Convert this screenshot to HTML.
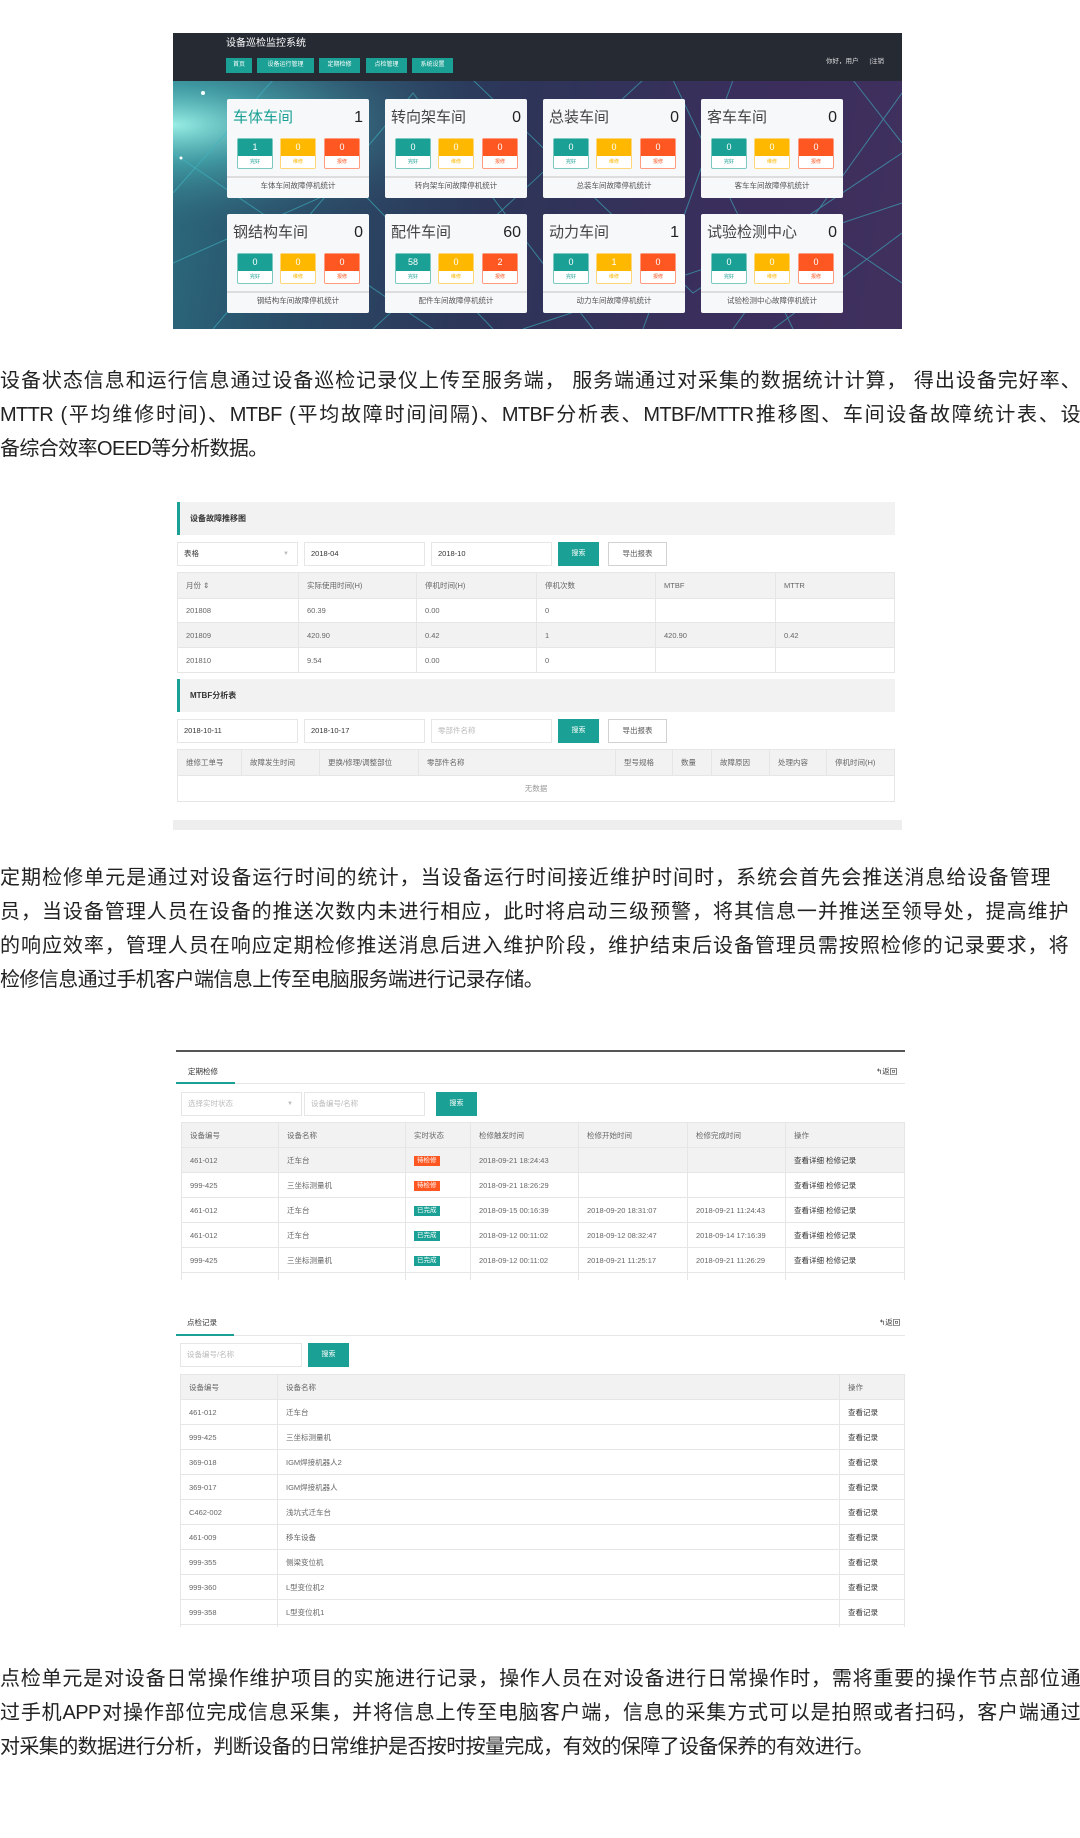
<!DOCTYPE html>
<html><head><meta charset="utf-8">
<style>
*{margin:0;padding:0;box-sizing:border-box}
body{width:1080px;height:1838px;background:#fff;position:relative;overflow:hidden;font-family:"Liberation Sans","Noto Sans CJK SC",sans-serif;}
.abs{position:absolute}
.p{position:absolute;left:0;font-size:20px;color:#222;line-height:34px;letter-spacing:-0.6px}
.p div{text-align:justify;text-align-last:justify;white-space:nowrap;height:34px;overflow:visible}
.p div.l{text-align-last:left}
#dash{left:173px;top:33px;width:729px;height:296px;overflow:hidden;background:linear-gradient(100deg,#2b6f80 0%,#2a4a66 22%,#2d3558 45%,#3a2e5c 75%,#40305e 100%)}
#dash .hd{position:absolute;left:0;top:0;width:100%;height:48px;background:#262a33}
.nav{position:absolute;top:25px;height:15px;background:#1aa094;color:#fff;font-size:6px;line-height:15px;text-align:center}
.card{position:absolute;width:142px;height:99px;background:#f7f8fa;border-radius:2px}
.card .t{position:absolute;left:6px;top:9px;font-size:15px;color:#444;line-height:20px}
.card .n{position:absolute;right:6px;top:9px;font-size:16px;color:#222;line-height:20px}
.bx{position:absolute;top:39px;width:36px;height:31px;border:1px solid;border-radius:2px;background:#fff}
.bx b{display:block;height:17px;color:#fff;font-weight:normal;font-size:9px;line-height:17px;text-align:center}
.bx i{display:block;font-style:normal;font-size:5px;line-height:12px;text-align:center}
.g{border-color:#7cc9c2}.g b{background:#1aa094}.g i{color:#1aa094}
.y{border-color:#ffd57a}.y b{background:#ffb800}.y i{color:#ffb800}
.r{border-color:#ff9c80}.r b{background:#ff5722}.r i{color:#ff5722}
.card .dv{position:absolute;left:0;top:77px;width:100%;height:2px;background:#ddd}
.card .f{position:absolute;left:0;top:80px;width:100%;text-align:center;font-size:7.5px;color:#555;line-height:14px}
.shot{position:absolute;font-size:7.5px;color:#666}
.inp{position:absolute;border:1px solid #e6e6e6;background:#fff;font-size:7.5px;line-height:22px;padding-left:6px;color:#333}
.btn{position:absolute;background:#1aa094;color:#fff;font-size:7px;text-align:center}
table{border-collapse:collapse;position:absolute;font-size:7.5px;color:#666}
td{border:1px solid #e6e6e6;padding-left:8px;white-space:nowrap;overflow:hidden}
.tag{display:inline-block;color:#fff;font-size:6.5px;padding:0 3px;line-height:10px}
</style></head><body>

<div id="dash" class="abs">
<svg class="abs" style="left:0;top:0" width="729" height="296">
<defs><radialGradient id="gl" cx="0" cy="0.18" r="0.45"><stop offset="0" stop-color="#9ff5ea" stop-opacity="0.95"/><stop offset="0.35" stop-color="#4fc0c0" stop-opacity="0.55"/><stop offset="1" stop-color="#2a4a66" stop-opacity="0"/></radialGradient></defs>
<rect x="0" y="47" width="729" height="249" fill="url(#gl)"/>
<g stroke="#3fb6c4" stroke-width="1" opacity="0.6" fill="none">
<path d="M0 230 L180 150 L320 296"/><path d="M40 296 L240 60 L420 296"/><path d="M300 47 L520 260 L729 120"/>
<path d="M560 47 L470 296"/><path d="M600 296 L729 200"/><path d="M680 47 L729 110"/><path d="M100 47 L0 160"/>
<path d="M350 296 L729 170"/><path d="M200 296 L470 47"/><path d="M729 60 L560 296"/><path d="M0 120 L260 296"/>
<path d="M640 190 L729 250"/><path d="M500 47 L620 296"/>
</g>
<circle cx="563" cy="186" r="4" fill="#fff"/><circle cx="30" cy="60" r="2" fill="#fff"/><circle cx="8" cy="125" r="1.5" fill="#fff"/>
</svg>
<div class="hd"></div>
<div class="abs" style="left:53px;top:4px;color:#fff;font-size:10px;line-height:14px">设备巡检监控系统</div>
<div class="nav" style="left:53px;width:26px">首页</div>
<div class="nav" style="left:84px;width:57px">设备运行管理</div>
<div class="nav" style="left:146px;width:41px">定期检修</div>
<div class="nav" style="left:193px;width:41px">点检管理</div>
<div class="nav" style="left:239px;width:41px">系统设置</div>
<div class="abs" style="left:653px;top:22px;color:#ddd;font-size:6.5px">你好，用户 &nbsp;&nbsp;&nbsp;&nbsp;&nbsp;|注销</div>

<div class="card" style="left:54px;top:66px"><div class="t" style="color:#1aa094">车体车间</div><div class="n">1</div><div class="bx g" style="left:10px"><b>1</b><i>完好</i></div><div class="bx y" style="left:53px"><b>0</b><i>维修</i></div><div class="bx r" style="left:97px"><b>0</b><i>报修</i></div><div class="dv"></div><div class="f">车体车间故障停机统计</div></div>
<div class="card" style="left:212px;top:66px"><div class="t">转向架车间</div><div class="n">0</div><div class="bx g" style="left:10px"><b>0</b><i>完好</i></div><div class="bx y" style="left:53px"><b>0</b><i>维修</i></div><div class="bx r" style="left:97px"><b>0</b><i>报修</i></div><div class="dv"></div><div class="f">转向架车间故障停机统计</div></div>
<div class="card" style="left:370px;top:66px"><div class="t">总装车间</div><div class="n">0</div><div class="bx g" style="left:10px"><b>0</b><i>完好</i></div><div class="bx y" style="left:53px"><b>0</b><i>维修</i></div><div class="bx r" style="left:97px"><b>0</b><i>报修</i></div><div class="dv"></div><div class="f">总装车间故障停机统计</div></div>
<div class="card" style="left:528px;top:66px"><div class="t">客车车间</div><div class="n">0</div><div class="bx g" style="left:10px"><b>0</b><i>完好</i></div><div class="bx y" style="left:53px"><b>0</b><i>维修</i></div><div class="bx r" style="left:97px"><b>0</b><i>报修</i></div><div class="dv"></div><div class="f">客车车间故障停机统计</div></div>
<div class="card" style="left:54px;top:181px"><div class="t">钢结构车间</div><div class="n">0</div><div class="bx g" style="left:10px"><b>0</b><i>完好</i></div><div class="bx y" style="left:53px"><b>0</b><i>维修</i></div><div class="bx r" style="left:97px"><b>0</b><i>报修</i></div><div class="dv"></div><div class="f">钢结构车间故障停机统计</div></div>
<div class="card" style="left:212px;top:181px"><div class="t">配件车间</div><div class="n">60</div><div class="bx g" style="left:10px"><b>58</b><i>完好</i></div><div class="bx y" style="left:53px"><b>0</b><i>维修</i></div><div class="bx r" style="left:97px"><b>2</b><i>报修</i></div><div class="dv"></div><div class="f">配件车间故障停机统计</div></div>
<div class="card" style="left:370px;top:181px"><div class="t">动力车间</div><div class="n">1</div><div class="bx g" style="left:10px"><b>0</b><i>完好</i></div><div class="bx y" style="left:53px"><b>1</b><i>维修</i></div><div class="bx r" style="left:97px"><b>0</b><i>报修</i></div><div class="dv"></div><div class="f">动力车间故障停机统计</div></div>
<div class="card" style="left:528px;top:181px"><div class="t">试验检测中心</div><div class="n">0</div><div class="bx g" style="left:10px"><b>0</b><i>完好</i></div><div class="bx y" style="left:53px"><b>0</b><i>维修</i></div><div class="bx r" style="left:97px"><b>0</b><i>报修</i></div><div class="dv"></div><div class="f">试验检测中心故障停机统计</div></div>
</div>

<div class="p" style="top:364px;width:1080px">
<div>设备状态信息和运行信息通过设备巡检记录仪上传至服务端， 服务端通过对采集的数据统计计算， 得出设备完好率、</div>
<div>MTTR (平均维修时间)、MTBF (平均故障时间间隔)、MTBF分析表、MTBF/MTTR推移图、车间设备故障统计表、设</div>
<div class="l">备综合效率OEED等分析数据。</div>
</div>

<div class="shot" style="left:173px;top:501px;width:729px;height:329px">
<div class="abs" style="left:4px;top:1px;width:718px;height:33px;background:#f2f2f2;border-left:3px solid #1aa094"></div>
<div class="abs" style="left:17px;top:12px;font-size:8px;font-weight:bold;color:#333">设备故障推移图</div>
<div class="inp" style="left:4px;top:41px;width:121px;height:24px">表格<span style="position:absolute;right:8px;color:#bbb;font-size:6px">▼</span></div>
<div class="inp" style="left:131px;top:41px;width:121px;height:24px">2018-04</div>
<div class="inp" style="left:258px;top:41px;width:121px;height:24px">2018-10</div>
<div class="btn" style="left:385px;top:41px;width:41px;height:24px;line-height:24px">搜索</div>
<div class="inp" style="left:435px;top:41px;width:59px;height:24px;text-align:center;padding:0;color:#555;border-color:#d2d2d2">导出报表</div>
<table style="left:4px;top:71px;width:718px">
<tr style="background:#f2f2f2;height:26px"><td style="width:121px">月份 ⇕</td><td style="width:118px">实际使用时间(H)</td><td style="width:120px">停机时间(H)</td><td style="width:119px">停机次数</td><td style="width:120px">MTBF</td><td>MTTR</td></tr>
<tr style="height:24px"><td>201808</td><td>60.39</td><td>0.00</td><td>0</td><td></td><td></td></tr>
<tr style="height:25px;background:#f2f2f2"><td>201809</td><td>420.90</td><td>0.42</td><td>1</td><td>420.90</td><td>0.42</td></tr>
<tr style="height:25px"><td>201810</td><td>9.54</td><td>0.00</td><td>0</td><td></td><td></td></tr>
</table>
<div class="abs" style="left:4px;top:178px;width:718px;height:33px;background:#f2f2f2;border-left:3px solid #1aa094"></div>
<div class="abs" style="left:17px;top:189px;font-size:8px;font-weight:bold;color:#333">MTBF分析表</div>
<div class="inp" style="left:4px;top:218px;width:121px;height:24px">2018-10-11</div>
<div class="inp" style="left:131px;top:218px;width:121px;height:24px">2018-10-17</div>
<div class="inp" style="left:258px;top:218px;width:121px;height:24px;color:#bbb">零部件名称</div>
<div class="btn" style="left:385px;top:218px;width:41px;height:24px;line-height:24px">搜索</div>
<div class="inp" style="left:435px;top:218px;width:59px;height:24px;text-align:center;padding:0;color:#555;border-color:#d2d2d2">导出报表</div>
<table style="left:4px;top:248px;width:718px">
<tr style="background:#f2f2f2;height:26px"><td style="width:64px">维修工单号</td><td style="width:78px">故障发生时间</td><td style="width:99px">更换/修理/调整部位</td><td style="width:197px">零部件名称</td><td style="width:57px">型号规格</td><td style="width:39px">数量</td><td style="width:58px">故障原因</td><td style="width:57px">处理内容</td><td>停机时间(H)</td></tr>
<tr style="height:26px"><td colspan="9" style="text-align:center;color:#999;padding:0">无数据</td></tr>
</table>
<div class="abs" style="left:0;top:319px;width:729px;height:10px;background:#eee"></div>
</div>

<div class="p" style="top:861px;width:1068px">
<div style="width:1050px">定期检修单元是通过对设备运行时间的统计，当设备运行时间接近维护时间时，系统会首先会推送消息给设备管理</div>
<div>员，当设备管理人员在设备的推送次数内未进行相应，此时将启动三级预警，将其信息一并推送至领导处，提高维护</div>
<div>的响应效率，管理人员在响应定期检修推送消息后进入维护阶段，维护结束后设备管理员需按照检修的记录要求，将</div>
<div class="l">检修信息通过手机客户端信息上传至电脑服务端进行记录存储。</div>
</div>

<div class="shot" style="left:176px;top:1050px;width:729px;height:230px;overflow:hidden">
<div class="abs" style="left:0;top:0;width:729px;height:2px;background:#555"></div>
<div class="abs" style="left:12px;top:16px;color:#333">定期检修</div>
<div class="abs" style="left:0;top:33px;width:729px;height:1px;background:#e6e6e6"></div>
<div class="abs" style="left:0;top:32px;width:59px;height:2px;background:#1aa094"></div>
<div class="abs" style="left:700px;top:16px;color:#333">↰返回</div>
<div class="inp" style="left:5px;top:42px;width:121px;height:24px;color:#bbb">选择实时状态<span style="position:absolute;right:8px;font-size:6px">▼</span></div>
<div class="inp" style="left:128px;top:42px;width:121px;height:24px;color:#bbb">设备编号/名称</div>
<div class="btn" style="left:260px;top:42px;width:41px;height:24px;line-height:24px">搜索</div>
<table style="left:5px;top:72px;width:724px">
<tr style="background:#f2f2f2;height:25px"><td style="width:97px">设备编号</td><td style="width:127px">设备名称</td><td style="width:65px">实时状态</td><td style="width:108px">检修触发时间</td><td style="width:109px">检修开始时间</td><td style="width:98px">检修完成时间</td><td>操作</td></tr>
<tr style="height:25px;background:#f2f2f2"><td>461-012</td><td>迁车台</td><td><span class="tag" style="background:#ff5722">待检修</span></td><td>2018-09-21 18:24:43</td><td></td><td></td><td style="color:#333">查看详细 检修记录</td></tr>
<tr style="height:25px"><td>999-425</td><td>三坐标测量机</td><td><span class="tag" style="background:#ff5722">待检修</span></td><td>2018-09-21 18:26:29</td><td></td><td></td><td style="color:#333">查看详细 检修记录</td></tr>
<tr style="height:25px"><td>461-012</td><td>迁车台</td><td><span class="tag" style="background:#1aa094">已完成</span></td><td>2018-09-15 00:16:39</td><td>2018-09-20 18:31:07</td><td>2018-09-21 11:24:43</td><td style="color:#333">查看详细 检修记录</td></tr>
<tr style="height:25px"><td>461-012</td><td>迁车台</td><td><span class="tag" style="background:#1aa094">已完成</span></td><td>2018-09-12 00:11:02</td><td>2018-09-12 08:32:47</td><td>2018-09-14 17:16:39</td><td style="color:#333">查看详细 检修记录</td></tr>
<tr style="height:25px"><td>999-425</td><td>三坐标测量机</td><td><span class="tag" style="background:#1aa094">已完成</span></td><td>2018-09-12 00:11:02</td><td>2018-09-21 11:25:17</td><td>2018-09-21 11:26:29</td><td style="color:#333">查看详细 检修记录</td></tr>
<tr style="height:25px"><td></td><td></td><td></td><td></td><td></td><td></td><td></td></tr>
</table>
</div>

<div class="shot" style="left:176px;top:1315px;width:729px;height:312px;overflow:hidden">
<div class="abs" style="left:11px;top:2px;color:#333">点检记录</div>
<div class="abs" style="left:0;top:20px;width:729px;height:1px;background:#e6e6e6"></div>
<div class="abs" style="left:0;top:19px;width:58px;height:2px;background:#1aa094"></div>
<div class="abs" style="left:703px;top:2px;color:#333">↰返回</div>
<div class="inp" style="left:4px;top:28px;width:122px;height:24px;color:#bbb">设备编号/名称</div>
<div class="btn" style="left:132px;top:28px;width:41px;height:24px;line-height:24px">搜索</div>
<table style="left:4px;top:59px;width:725px">
<tr style="background:#f2f2f2;height:25px"><td style="width:97px">设备编号</td><td style="width:562px">设备名称</td><td>操作</td></tr>
<tr style="height:25px"><td>461-012</td><td>迁车台</td><td style="color:#333">查看记录</td></tr>
<tr style="height:25px"><td>999-425</td><td>三坐标测量机</td><td style="color:#333">查看记录</td></tr>
<tr style="height:25px"><td>369-018</td><td>IGM焊接机器人2</td><td style="color:#333">查看记录</td></tr>
<tr style="height:25px"><td>369-017</td><td>IGM焊接机器人</td><td style="color:#333">查看记录</td></tr>
<tr style="height:25px"><td>C462-002</td><td>浅坑式迁车台</td><td style="color:#333">查看记录</td></tr>
<tr style="height:25px"><td>461-009</td><td>移车设备</td><td style="color:#333">查看记录</td></tr>
<tr style="height:25px"><td>999-355</td><td>侧梁变位机</td><td style="color:#333">查看记录</td></tr>
<tr style="height:25px"><td>999-360</td><td>L型变位机2</td><td style="color:#333">查看记录</td></tr>
<tr style="height:25px"><td>999-358</td><td>L型变位机1</td><td style="color:#333">查看记录</td></tr>
<tr style="height:25px"><td></td><td></td><td></td></tr>
</table>
</div>

<div class="p" style="top:1662px;width:1080px">
<div>点检单元是对设备日常操作维护项目的实施进行记录，操作人员在对设备进行日常操作时，需将重要的操作节点部位通</div>
<div>过手机APP对操作部位完成信息采集，并将信息上传至电脑客户端，信息的采集方式可以是拍照或者扫码，客户端通过</div>
<div class="l">对采集的数据进行分析，判断设备的日常维护是否按时按量完成，有效的保障了设备保养的有效进行。</div>
</div>
</body></html>
